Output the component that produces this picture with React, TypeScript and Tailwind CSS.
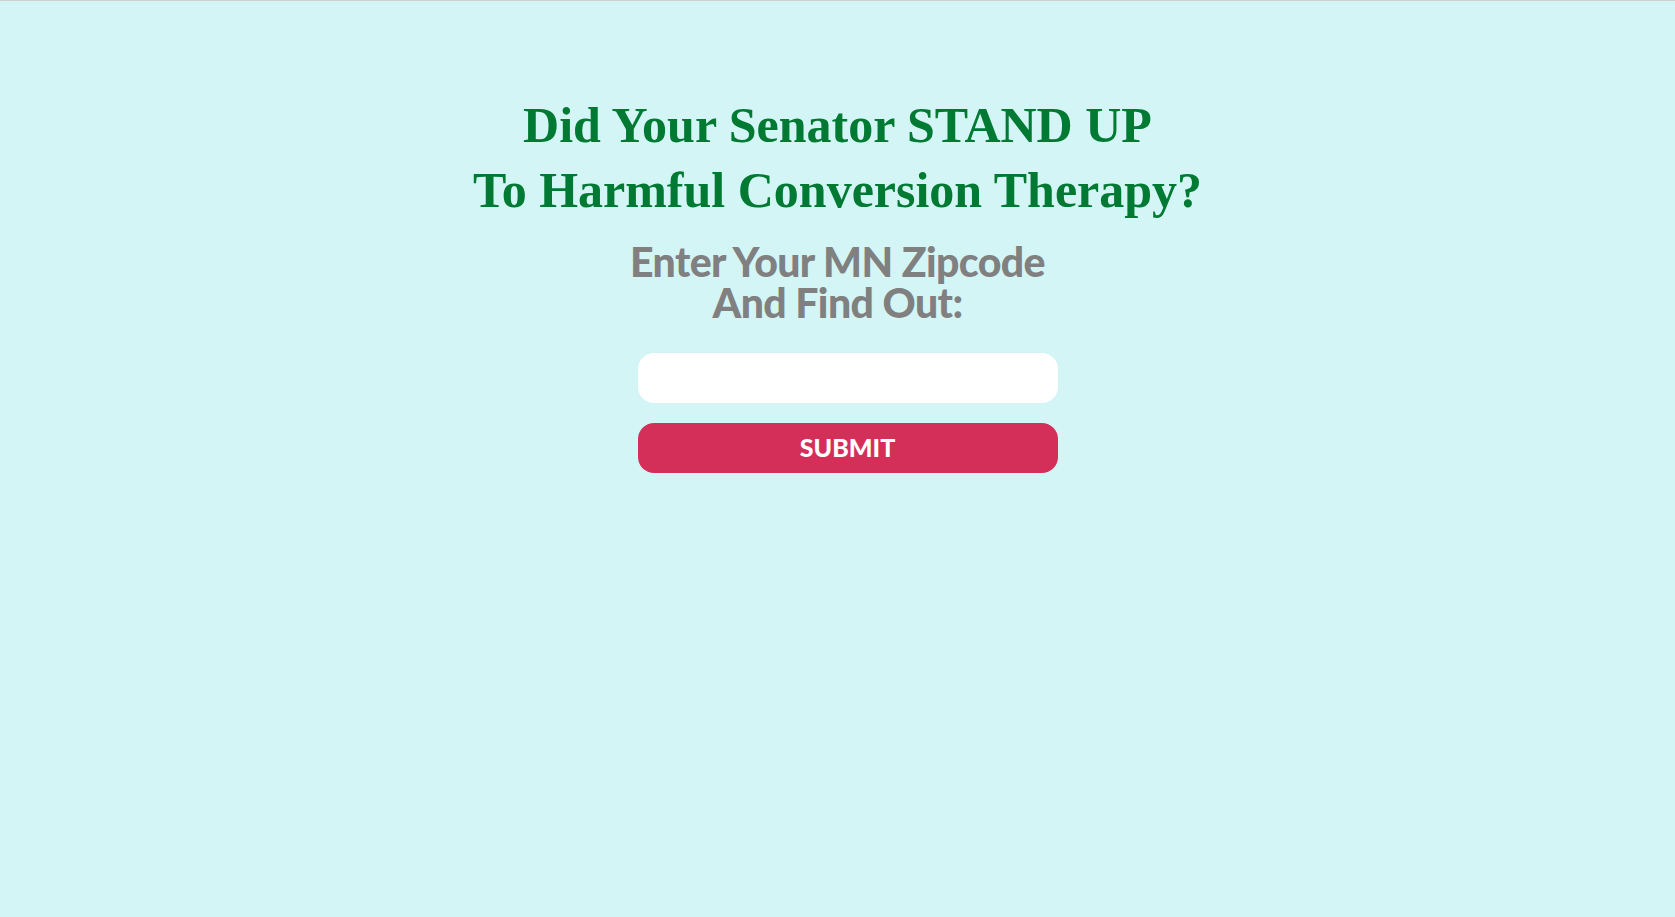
export default function App() {
  return (
    <div className="min-h-[917px] w-full border-t border-[#cfcfcf] bg-[#d3f5f5]">
      <div className="flex flex-col items-center pt-[92px]">
        <h1
          className="text-center text-[50px] font-bold leading-[65px] text-[#007a33]"
          style={{ fontFamily: '"Liberation Serif", "Times New Roman", serif' }}
        >
          Did Your Senator STAND UP
          <br />
          To Harmful Conversion Therapy?
        </h1>
        <h2
          className="mt-[18px] text-center text-[41px] font-black leading-[41px] tracking-[-0.6px] text-[#808080]"
          style={{ fontFamily: 'Lato, "Noto Sans", sans-serif' }}
        >
          Enter Your MN Zipcode
          <br />
          And Find Out:
        </h2>
        <form className="mt-[30px] flex w-[420px] translate-x-[10px] flex-col gap-[20px]">
          <input
            type="text"
            className="h-[50px] w-full rounded-[16px] bg-white px-4 text-xl outline-none"
          />
          <button
            type="button"
            className="h-[50px] w-full rounded-[16px] bg-[#d42f58] text-[25px] font-black text-white"
            style={{ fontFamily: 'Lato, "Noto Sans", sans-serif' }}
          >
            SUBMIT
          </button>
        </form>
      </div>
    </div>
  );
}
